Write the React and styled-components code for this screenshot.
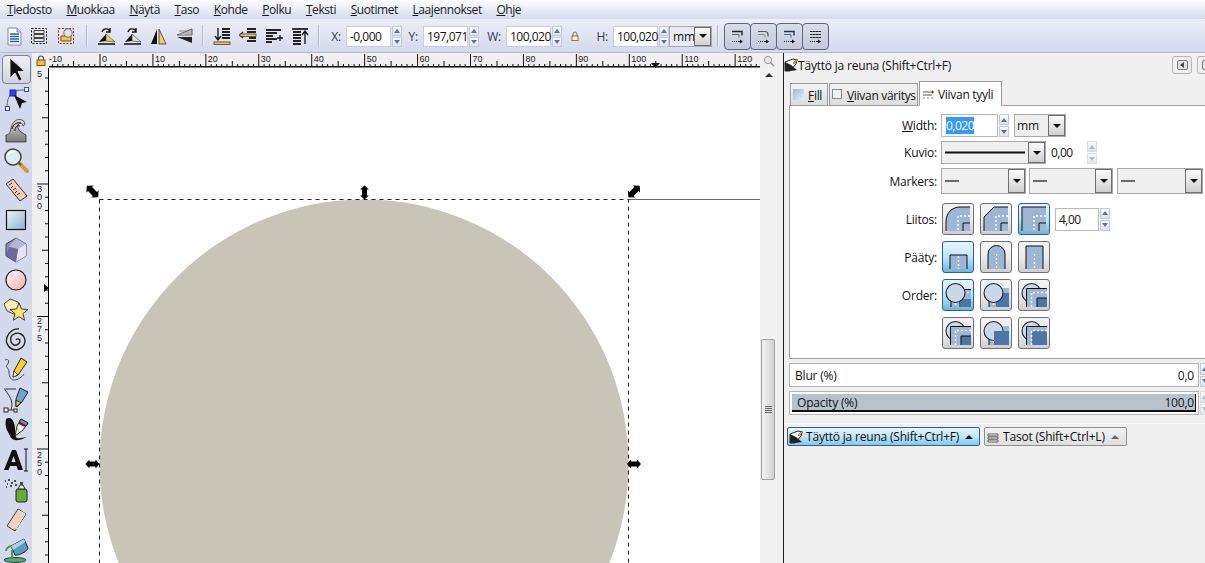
import React from "react";
import styled, { createGlobalStyle } from "styled-components";

const Global = createGlobalStyle`
  html, body { margin: 0; padding: 0; background: #f0f0f0; }
  body { font-family: "Open Sans", "Noto Sans", sans-serif; font-size: 12px; letter-spacing: -0.2px; color: #111; }
`;
const Page = styled.div`
  width: 1205px; height: 563px; overflow: hidden; display: flex; flex-direction: column;
`;
const MenuBar = styled.div`
  height: 19px; display: flex; align-items: center; gap: 14.6px; padding-left: 7px;
  background: linear-gradient(#fbfcfe, #f3f5fa 25%, #d4d9ed);
  border-bottom: 1px solid #eef0f8;
`;
const MenuItem = styled.span`font-size: 12px; letter-spacing: -0.42px; color: #1a1a1a;`;
const ToolBar = styled.div`
  height: 32px; display: flex; align-items: center; padding-left: 1px;
  background: linear-gradient(#eceef7, #d4d9ec);
  border-bottom: 1px solid #b4b9cb;
`;
const TIcon = styled.div`
  width: ${p => p.$w || 26}px; height: 24px; display: flex; align-items: center; justify-content: center; flex: none;
`;
const Sep = styled.div`
  width: 1px; height: 22px; background: #b6bac8; border-right: 1px solid #eef0f7; flex: none;
  margin: 0 5px;
`;
const CoordLabel = styled.span`
  flex: none; text-align: right; width: ${p => p.$w}px; margin-right: 5px; color: #333a55;
`;
const Field = styled.div`
  flex: none; width: ${p => p.$w}px; height: ${p => p.$h || 21}px; background: #fff; border: 1px solid ${p => p.$bc || "#c9cdd8"};
  box-sizing: border-box; display: flex; align-items: center; padding: 0 ${p => p.$pad || 2}px; letter-spacing: -0.5px; color: #111;
  margin-left: ${p => p.$ml || 0}px;
`;
const Spin = styled.div`
  flex: none; width: 11px; height: ${p => p.$h || 21}px; display: flex; flex-direction: column; box-sizing: border-box; gap: 1px; padding-left: 1px;
`;
const SpinPart = styled.div`
  flex: 1; border: 1px solid ${p => (p.$off ? "#dcdcdc" : "#c4c8d2")}; background: linear-gradient(#fbfbfd, #dfe3ee);
  display: flex; align-items: center; justify-content: center; box-sizing: border-box;
  &::after { content: ""; border-left: 3px solid transparent; border-right: 3px solid transparent;
    ${p => (p.$down ? "border-top" : "border-bottom")}: 4px solid ${p => (p.$off ? "#b4b8c0" : "#5a6fae")}; }
`;
const Spinner = ({ h, off }) => (
  <Spin $h={h}><SpinPart $off={off} /><SpinPart $down $off={off} /></Spin>
);
const Combo = styled.div`
  flex: none; width: ${p => p.$w}px; height: ${p => p.$h}px; box-sizing: border-box; border: 1px solid #a9a9a9; background: ${p => p.$bg || "#f0f0f0"};
  display: flex; align-items: stretch; margin-left: ${p => p.$ml || 0}px;
`;
const ComboText = styled.div`
  flex: 1; display: flex; align-items: center; padding-left: ${p => p.$pl || 3}px; min-width: 0;
`;
const ComboArrow = styled.div`
  width: 17px; box-sizing: border-box; border: 1px solid #6e6e6e; background: linear-gradient(#fafafa, #e6e6e6 50%, #cfcfcf);
  display: flex; align-items: center; justify-content: center; flex: none;
  &::after { content: ""; border-left: 4px solid transparent; border-right: 4px solid transparent; border-top: 4px solid #111; }
`;
const SnapBtn = styled.div`
  width: 27px; height: 27px; box-sizing: border-box; flex: none; border: 1px solid #5e6578; border-radius: 4px; margin-right: -1px;
  background: linear-gradient(#d9deec, #c3c9dc); display: flex; align-items: center; justify-content: center;
`;
const Main = styled.div`flex: 1; display: flex; min-height: 0;`;
const ToolBox = styled.div`
  width: 32px; flex: none; background: #d4daee; padding-top: 2px; box-sizing: border-box; display: flex; flex-direction: column; align-items: center;
`;
const Tool = styled.div`
  width: 29px; height: 30px; box-sizing: border-box; display: flex; align-items: center; justify-content: center; flex: none;
  ${p => p.$active && `border: 1px solid #7b8190; border-radius: 4px; background: linear-gradient(#eff0f3,#d2d4dc); height: 29px; margin-bottom: 1px;`}
`;
const Work = styled.div`
  width: 745px; flex: none; display: grid; grid-template-columns: 17px 711px 17px; grid-template-rows: 15px 1fr;
  background: #f0f0f0; min-height: 0;
`;
const LockCell = styled.div`display: flex; align-items: center; justify-content: center;`;
const TopRuler = styled.div`overflow: hidden; height: 15px;`;
const ZoomCell = styled.div`display: flex; align-items: center; justify-content: center; background: #f0f0f0;`;
const SideRuler = styled.div`overflow: hidden;`;
const Canvas = styled.div`background: #fff; overflow: hidden;`;
const ScrollBar = styled.div`
  background: #f1f1f1; position: relative; display: flex; justify-content: center; padding-top: 5px; box-sizing: border-box;
  &::before { content: ""; border-left: 4px solid transparent; border-right: 4px solid transparent; border-bottom: 4px solid #333; height: 0; }
`;
const Thumb = styled.div`
  position: absolute; left: 1px; top: 271px; width: 14px; height: 141px; box-sizing: border-box;
  border: 1px solid #a3a3a3; border-radius: 2px; background: linear-gradient(90deg, #f2f2f2, #e4e4e4 45%, #cfcfcf);
  display: flex; align-items: center; justify-content: center;
`;
const Grip = styled.div`
  width: 7px; height: 7px; background: repeating-linear-gradient(#666 0 1px, #ddd 1px 2px);
`;
const Gutter = styled.div`width: 6px; flex: none; background: #f0f0f0;`;
const Panel = styled.div`
  flex: 1; min-width: 0; background: #f0f0f0; border-left: 1px solid #1c1c1c; display: flex; flex-direction: column; padding-left: 5px; box-sizing: border-box;
`;
const PanelTitle = styled.div`
  height: 24px; margin-left: -5px; display: flex; align-items: center; padding-left: 0; flex: none;
`;
const TitleBtns = styled.div`margin-left: auto; display: flex; gap: 5px; margin-right: -12px;`;
const TitleBtn = styled.div`
  width: 20px; height: 18px; box-sizing: border-box; border: 1px solid #b5b5b5; border-radius: 3px; background: #efefef;
  display: flex; align-items: center; justify-content: center;
`;
const TitleGlyph = styled.div`
  width: 11px; height: 10px; box-sizing: border-box; border: 1px solid #777; border-radius: 2px; background: #e4e4e4; display: flex; align-items: center; justify-content: center;
  &::after { content: ""; border-top: 3px solid transparent; border-bottom: 3px solid transparent; border-right: 4px solid #444; }
`;
const Tabs = styled.div`
  height: 25px; display: flex; align-items: flex-end; padding-left: 2px; gap: 1px; flex: none; margin-top: 4px; margin-left: -1px; position: relative; z-index: 1; margin-bottom: -1px;
`;
const Tab = styled.div`
  box-sizing: border-box; width: ${p => p.$w}px; height: ${p => (p.$active ? 25 : 23)}px; border: 1px solid #9a9a9a; display: flex; align-items: center; gap: ${p => (p.$active ? 4 : 3)}px; padding: 1px 0 0 ${p => (p.$active ? 3 : 2)}px;
  white-space: nowrap; letter-spacing: -0.3px; overflow: hidden;
  background: ${p => (p.$active ? "#fff" : "linear-gradient(#f4f4f4,#dcdcdc)")};
  ${p => p.$active && "border-bottom: 1px solid #fff;"}
`;
const Book = styled.div`
  height: 254px; box-sizing: border-box; background: #fff; border: 1px solid #a0a0a0; border-right: none; flex: none; padding-top: 8px;
`;
const Row = styled.div`
  display: flex; align-items: center; height: ${p => p.$h}px; margin-top: ${p => p.$mt || 0}px;
`;
const RowLabel = styled.div`
  width: 151px; flex: none; text-align: right; padding-right: 4px; box-sizing: border-box; color: #111;
`;
const Btns = styled.div`display: flex; gap: 6px; flex: none; margin-left: 1px;`;
const StyleBtn = styled.div`
  width: 32px; height: 32px; box-sizing: border-box; border: 1px solid ${p => (p.$on ? "#2c628b" : "#707070")}; border-radius: 3px; flex: none;
  background: ${p => (p.$on ? "linear-gradient(#e6f5fd,#bfe6fb 50%,#6bb6dc)" : "linear-gradient(#f3f3f3,#ececec 50%,#cfcfcf)")};
  display: flex; align-items: center; justify-content: center;
`;
const Selected = styled.span`background: #3399ff; color: #fff;`;
const Slider = styled.div`
  height: 24px; box-sizing: border-box; flex: none; display: flex; margin-top: 4px;
`;
const SliderBody = styled.div`
  width: 410px; box-sizing: border-box; border: 1px solid #b4b4b4; background: #fff; padding: ${p => (p.$fill ? "2px" : "0")};
  display: flex; flex: none;
`;
const SliderFill = styled.div`
  flex: 1; display: flex; align-items: center; justify-content: space-between; padding: 0 ${p => (p.$fill ? 1 : 4)}px 0 5px;
  background: ${p => (p.$fill ? "#b6c2cc" : "#fff")};
  ${p => p.$fill && "border-bottom: 2px solid #111; border-right: 1px solid #111;"}
`;
const SliderSpin = styled.div`width: 6px; overflow: hidden; flex: none;`;
const Dock = styled.div`
  margin-top: 8px; border-top: 1px solid #fafafa; margin-left: -5px; padding: 3px 0 0 3px; display: flex; gap: 4px; flex: none;
`;
const DockBtn = styled.div`
  height: 19px; width: ${p => p.$w}px; box-sizing: border-box; border: 1px solid ${p => (p.$on ? "#2c628b" : "#8e8f8f")}; border-radius: 2px; display: flex; align-items: center; gap: 3px; padding-left: 1px; flex: none;
  background: ${p => (p.$on ? "linear-gradient(#e6f5fd,#bfe6fb 50%,#85c8ea)" : "linear-gradient(#f3f3f3,#dedede)")};
`;
const Caret = styled.span`
  margin-left: 3px; border-left: 4px solid transparent; border-right: 4px solid transparent; border-bottom: 4px solid ${p => p.$c}; 
`;

const M = ({ u, children }) => (
  <MenuItem><u>{u}</u>{children}</MenuItem>
);
const menus = [["T", "iedosto"], ["M", "uokkaa"], ["N", "äytä"], ["T", "aso"], ["K", "ohde"], ["P", "olku"], ["T", "eksti"], ["S", "uotimet"], ["L", "aajennokset"], ["O", "hje"]];

/* ---------- toolbar icons ---------- */
const S = ({ children, s = 22 }) => <svg width={s} height={s} viewBox={`0 0 ${s} ${s}`}>{children}</svg>;
const Doc = () => <S><path d="M5 3h9l4 4v13H5z" fill="#fff" stroke="#7a8aa8" /><path d="M14 3v4h4" fill="#d5dce8" stroke="#7a8aa8" /><path d="M7 9h9M7 11.500h9M7 14h9M7 16.500h9" stroke="#2c5fb0" strokeWidth="1.400" /></S>;
const SelLayers = () => <S><rect x="3.500" y="3.500" width="15" height="15" fill="none" stroke="#111" strokeDasharray="2 1.500" /><path d="M6 5.500h10v3H6zM6 9.500h10v3H6zM6 13.500h10v3H6z" fill="#e6e6e6" stroke="#444" /></S>;
const SelTouch = () => <S><rect x="3.500" y="3.500" width="15" height="15" fill="none" stroke="#d01010" strokeDasharray="2 1.500" /><path d="M6 11h5v-1h5v6H6z" fill="#f0c93a" stroke="#6a5a10" /><circle cx="13" cy="8" r="4.200" fill="#d8e8f4" stroke="#667" /></S>;
const Raise = ({ flip }) => <S>
  <path d="M3 19h17" stroke="#111" strokeWidth="1.500" />
  <path d="M4 17l7-1V9z" fill="#111" /><path d="M11 16l9 1-9-8z" fill={flip ? "#e0e0e0" : "#f0cf60"} stroke="#333" strokeWidth=".6" />
  <path d="M7 7c1-4 6-4 8-1M15 3v4h-4" fill="none" stroke="#111" strokeWidth="1.400" />
</S>;
const FlipH = () => <S><path d="M10 4v15H4z" fill="#111" /><path d="M12 4v15h7z" fill="#f0cf60" stroke="#333" strokeWidth=".8" /></S>;
const FlipV = () => <S><path d="M19 4v6H4z" fill="#e2e2e2" stroke="#444" strokeWidth=".8" /><path d="M19 18v-6H4z" fill="#222" /><path d="M6 6h13M10 8h9" stroke="#777" strokeWidth=".8" /></S>;
const Align = ({ v }) => <S>
  {v === 0 && <><path d="M7 3v12M4 11l3 4 3-4" fill="none" stroke="#111" strokeWidth="1.300" /><path d="M11 4h8M11 7h8M11 10h8M11 13h8" stroke="#222" strokeWidth="2" /><rect x="3" y="17" width="16" height="2.500" fill="#f0cf60" stroke="#222" strokeWidth=".7" /></>}
  {v === 1 && <><path d="M3 10h7M6 7l-3 3 3 3" fill="none" stroke="#111" strokeWidth="1.300" /><path d="M10 4h9M10 7h9M12 13h7M10 16h9" stroke="#222" strokeWidth="2" /><rect x="3" y="9" width="16" height="2.500" fill="#f0cf60" stroke="#222" strokeWidth=".7" /></>}
  {v === 2 && <><path d="M3 5h15M3 8h11M3 11h7M3 14h11M3 17h6" stroke="#222" strokeWidth="2" /><path d="M14 13h6M17 10v6" stroke="#111" strokeWidth="1.300" /></>}
  {v === 3 && <><rect x="3" y="3" width="16" height="2" fill="#333" /><path d="M4 7h8M4 10h8M4 13h8M4 16h8M4 19h8" stroke="#222" strokeWidth="2" /><path d="M16 19V7M13 10l3-4 3 4" fill="none" stroke="#111" strokeWidth="1.300" /></>}
</S>;
const SnapArrow = () => <><path d="M3 13.500h1M5 13.500h1M7 13.500h1M9 13.500h2" stroke="#222" /><path d="M11 11.500l3 2-3 2z" fill="#111" /></>;
const Snap = ({ k }) => <S s={17}>
  {k === 0 && <><path d="M3 3.500h10v4" fill="none" stroke="#222" strokeWidth="1.400" /><path d="M3 6.500h7v3" fill="none" stroke="#667" /><SnapArrow /></>}
  {k === 1 && <><path d="M3 3.500h7c2 0 3 1 3 3v2" fill="none" stroke="#555" strokeWidth="1.200" /><path d="M3 6.500h5c2 0 2 1 2 3" fill="none" stroke="#888" /><SnapArrow /></>}
  {k === 2 && <><path d="M3 3.500h10v4" fill="none" stroke="#234" strokeWidth="1.400" /><path d="M3 6.500h7v3" fill="none" stroke="#46a" /><SnapArrow /></>}
  {k === 3 && <><path d="M3 3.500h11M3 6.500h11M3 9.500h11" stroke="#222" strokeDasharray="2 1" /><path d="M5.500 3v7M8.500 3v7M11.500 3v7" stroke="#555" strokeDasharray="1 2" /><SnapArrow /></>}
</S>;
const LockIcon = () => <S s={12}><path d="M3.500 5V3.500a2.500 2.500 0 0 1 5 0V5" fill="none" stroke="#555" strokeWidth="1.200" /><rect x="2" y="5" width="8" height="5.500" fill="#f2c23c" stroke="#7a5a10" /></S>;
const SmallLock = () => <S s={12}><path d="M4 6V4a2 2 0 0 1 4 0v2" fill="none" stroke="#777" /><rect x="3" y="6" width="6" height="4.500" fill="#f7f2d4" stroke="#8a7a30" /></S>;
const ZoomGlyph = () => <S s={12}><circle cx="5" cy="5" r="3.600" fill="#e8e8e8" stroke="#999" /><path d="M7.500 7.500l3.500 3.500" stroke="#999" strokeWidth="1.600" /></S>;

/* ---------- left toolbox icons ---------- */
const T = ({ children }) => <svg width="26" height="26" viewBox="0 0 26 26">{children}</svg>;
const SelectTool = () => <T><path d="M7 1v20l5-5 4 8 3-1.500-4-8h7z" fill="#111" stroke="#eee" strokeWidth=".8" /></T>;
const NodeTool = () => <T><path d="M4 21c0-8 2-14 7-16 3-2 7-2 11-2" fill="none" stroke="#666" /><rect x="7" y="3" width="6" height="6" fill="#3a3af0" stroke="#2222a0" /><rect x="21.500" y="0.500" width="4" height="4" fill="#fff" stroke="#4040e0" /><rect x="2.500" y="19.500" width="4" height="4" fill="#fff" stroke="#4040e0" /><path d="M11 8l13 7-5 1-2 6z" fill="#111" /></T>;
const TweakTool = () => <T><defs><linearGradient id="tw" x1="0" y1="0" x2="0" y2="1"><stop offset="0" stopColor="#ddd" /><stop offset="1" stopColor="#777" /></linearGradient></defs><path d="M3 18c3 0 4-2 5-7 1-6 6-10 11-8 3 1 4 5 1 6 0-3-4-4-5-1-1 4 2 7 8 10v7H3z" fill="url(#tw)" stroke="#333" strokeWidth=".8" /><path d="M9 12c1-5 5-7 9-6M12 14c0-4 2-6 5-5" fill="none" stroke="#111" /></T>;
const ZoomTool = () => <T><circle cx="10" cy="10" r="8" fill="#dcebf5" stroke="#444" strokeWidth="1.500" /><path d="M17 17l7 7" stroke="#e0962a" strokeWidth="4" strokeLinecap="round" /><path d="M15 15l3 3" stroke="#555" strokeWidth="2" /><path d="M5 8c1-3 4-4 6-3" fill="none" stroke="#fff" strokeWidth="1.600" /></T>;
const MeasureTool = () => <T><path d="M3 7l7-5 14 17-7 5z" fill="#f4cdb6" stroke="#333" /><path d="M6 8l3-2M8 11l2-2M10 13l3-2M12 16l2-2M14 18l3-2" stroke="#333" /></T>;
const RectTool = () => <T><defs><linearGradient id="rc" x1="0" y1="0" x2="1" y2="1"><stop offset="0" stopColor="#eef3f8" /><stop offset="1" stopColor="#8fb0cf" /></linearGradient></defs><rect x="3.500" y="3.500" width="19" height="19" fill="url(#rc)" stroke="#111" strokeWidth="1.200" /></T>;
const BoxTool = () => <T><path d="M13 1l10 6v12l-10 6-10-6V7z" fill="#8c8cbc" stroke="#444" /><path d="M13 1l10 6-8 5-9-2z" fill="#b6b6d8" /><path d="M15 12l8-5v12l-10 6z" fill="#e4e4f6" /><path d="M6 10l9 2-2 13-10-6z" fill="#6a6a9c" /></T>;
const CircleTool = () => <T><defs><linearGradient id="ci" x1="0" y1="0" x2="1" y2="1"><stop offset="0" stopColor="#fff" /><stop offset="1" stopColor="#f8a8a8" /></linearGradient></defs><circle cx="13" cy="13" r="10" fill="url(#ci)" stroke="#222" strokeWidth="1.200" /></T>;
const StarTool = () => <T><path d="M7 2l8 3 3 6-5 7-9-4-3-7z" fill="#f7eeb8" stroke="#444" /><path d="M16 6l2.500 6 6.500 0.500-5 4.200 1.600 6.500-5.600-3.500-5.600 3.500 1.600-6.500-5-4.200 6.500-.5z" fill="#f8e36c" stroke="#444" /></T>;
const SpiralTool = () => <T><path d="M13 13c1-2 4-1 4 1s-3 5-6 4-4-5-3-8 6-5 10-3 5 7 3 11-8 6-12 4-7-7-5-12S11 1 16 2" fill="none" stroke="#222" strokeWidth="1.400" /></T>;
const PencilTool = () => <T><path d="M2 3c5-2 4 3 2 5s2 3 2 7c0 3 1 8 5 8 4 0 8-3 10-6" fill="none" stroke="#444" /><path d="M18 1l6 4-9 13-5 2 1-6z" fill="#f7d02c" stroke="#222" /><path d="M10 20l1-6 4 4z" fill="#fff" stroke="#222" strokeWidth=".7" /></T>;
const PenTool = () => <T><path d="M1 2h12M2 3c4 5 9 11 6 20M3 23h10" fill="none" stroke="#333" /><rect x="1" y="21" width="4" height="4" fill="#fff" stroke="#222" /><rect x="11" y="22" width="3" height="3" fill="#fff" stroke="#222" /><path d="M17 1l8 4-6 10-5 5-1-1 0-7z" fill="#6aa6d0" stroke="#222" /><path d="M13 13l5 3-5 4z" fill="#f7d02c" stroke="#222" /></T>;
const CallTool = () => <T><path d="M3 2c-1 6 0 10 2 13s2 7 7 8 9-2 12-3c-4 0-9 3-11 0s0-9-2-14-4-6-8-4z" fill="#111" /><path d="M18 2l7 4-5 7-8 6 2-10z" fill="#fff" stroke="#222" /><path d="M18 2l7 4-2 3-7-4z" fill="#5a96c8" stroke="#222" /><path d="M16 6l6 3" stroke="#a01010" strokeWidth="2" /><path d="M14 11l2 4" stroke="#e0b020" /></T>;
const TextTool = () => <T><path d="M1 23L9 3h4l7 20h-5l-1.500-4H7l-1.500 4zM8.500 15h4L10.500 9z" fill="#111" fillRule="evenodd" /><path d="M21 2h4M23 2v22M21 24h4" stroke="#111" fill="none" /></T>;
const SprayTool = () => <T><rect x="13" y="12" width="11" height="13" rx="2" fill="#62b030" stroke="#222" /><path d="M15 12l2-4h3l2 4z" fill="#eee" stroke="#222" /><rect x="17" y="5" width="3" height="3" fill="#444" /><path d="M2 4h1M5 3h2M8 6h2M4 7h1M7 9h2M11 4h2M12 8h2M3 10h1" stroke="#222" strokeWidth="1.600" /></T>;
const EraserTool = () => <T><path d="M15 2l8 5-11 17-8-5z" fill="#f7cdbb" stroke="#444" /><path d="M15 3l7 4-9 15" fill="none" stroke="#fff" /></T>;
const FillTool = () => <T><ellipse cx="12" cy="23" rx="11" ry="2.500" fill="#5ea85e" stroke="#245" /><path d="M8 9l13-7 4 9c0 3-10 8-13 7z" fill="#5e9ac0" stroke="#123" /><path d="M8 9l13-7 1.500 3L10 13z" fill="#a8d0e8" /><path d="M8 9c-3 1-5 2-5 5M9 13v9" stroke="#4e9a4e" strokeWidth="2" fill="none" /></T>;
const tools = [NodeTool, TweakTool, ZoomTool, MeasureTool, RectTool, BoxTool, CircleTool, StarTool, SpiralTool, PencilTool, PenTool, CallTool, TextTool, SprayTool, EraserTool, FillTool];

/* ---------- rulers and canvas ---------- */
const PX10 = 52.93;
const RULER_FONT = "'Liberation Sans',sans-serif";
const TopRulerSvg = () => {
  const marks = [];
  for (let i = -10; i <= 125; i++) {
    const x = 51 + (i * PX10) / 10;
    const h = i % 10 === 0 ? 13 : i % 5 === 0 ? 6 : 3;
    marks.push(<line key={i} x1={x} x2={x} y1={14 - h} y2={14} stroke="#111" strokeWidth="1" />);
    if (i % 10 === 0) marks.push(<text key={"t" + i} x={x + 2} y={9} fontSize="9" letterSpacing="0" fontFamily={RULER_FONT} fill="#222">{i}</text>);
  }
  return <svg width="711" height="15">
    <rect x="0" y="13" width="711" height="1.500" fill="#111" />
    {marks}
    <path d="M602 10h9l-4.500 5z" fill="#111" />
  </svg>;
};
const SideRulerSvg = () => {
  const marks = [];
  const base = 116;
  for (let i = -8; i < 40; i++) {
    const y = base + i * 13.25;
    const long = ((i % 10) + 10) % 10 === 0;
    const mid = ((i % 5) + 5) % 5 === 0;
    marks.push(<line key={i} x1={long ? 5 : mid ? 10 : 13} x2={16} y1={y} y2={y} stroke="#111" />);
  }
  const label = (s, y0) => s.split("").map((c, i) => <text key={s + i} x="5" y={y0 + i * 8.300} fontSize="9" letterSpacing="0" fontFamily={RULER_FONT} fill="#223">{c}</text>);
  return <svg width="17" height="495">
    <rect x="16" y="0" width="1" height="495" fill="#000" />
    {marks}
    {label("5", 9)}{label("300", 124)}{label("275", 256)}{label("250", 390)}
    <path d="M12 216l5 4-5 4z" fill="#111" />
  </svg>;
};
const Handle = ({ x, y, r, k = 1 }) => <path transform={`translate(${x} ${y}) rotate(${r}) scale(${k})`} d="M-7 0L-3 -4.500V-2.500H3V-4.500L7 0L3 4.500V2.500H-3V4.500Z" fill="#000" />;
const CanvasSvg = () => (
  <svg width="711" height="495" viewBox="49 68 711 495">
    <path d="M628 199.500H760" stroke="#666" strokeWidth="1" />
    <circle cx="364" cy="464" r="264.500" fill="#c8c4b7" />
    <rect x="99.500" y="199.500" width="529" height="529" fill="none" stroke="#222" strokeDasharray="4 4" />
    <Handle x={92.500} y={191.500} r={45} k={1.150} />
    <Handle x={364.500} y={192.500} r={90} />
    <Handle x={634} y={191.500} r={-45} k={1.150} />
    <Handle x={92.500} y={464} r={0} />
    <Handle x={634} y={464} r={0} />
  </svg>
);

/* ---------- stroke style icons ---------- */
const B = ({ children }) => <svg width="30" height="30" viewBox="0 0 30 30">{children}</svg>;
const BL = "#9db6d6", DK = "#111", DB = "#4a76a8";
const Dots = ({ d }) => <path d={d} fill="none" stroke="#fff" strokeWidth="1.500" strokeDasharray="2 2" />;
const JoinRound = () => <B><path d="M3 27V18C3 9 9 3 17 3H27V27z" fill={BL} /><path d="M3 27V18C3 9 9 3 17 3H27" fill="none" stroke={DK} /><path d="M27 19H20V27" fill="none" stroke={DK} /><Dots d="M27 12H15V27" /></B>;
const JoinBevel = () => <B><path d="M3 27V13L13 3H27V27z" fill={BL} /><path d="M3 27V13L13 3H27" fill="none" stroke={DK} /><path d="M27 19H20V27" fill="none" stroke={DK} /><Dots d="M27 12H15V27" /></B>;
const JoinMiter = () => <B><path d="M3 27V3H27V27z" fill={BL} /><path d="M3 27V3H27" fill="none" stroke={DK} /><path d="M27 19H20V27" fill="none" stroke={DK} /><Dots d="M27 12H15V27" /></B>;
const CapButt = () => <B><path d="M7 27V13H24V27z" fill={BL} /><path d="M7 27V13H24V27" fill="none" stroke={DK} /><Dots d="M15.500 14V27" /></B>;
const CapRound = () => <B><path d="M7 27V12a8.500 8.500 0 0 1 17 0V27z" fill={BL} /><path d="M7 27V12a8.500 8.500 0 0 1 17 0V27" fill="none" stroke={DK} /><Dots d="M15.500 12V27" /></B>;
const CapSquare = () => <B><path d="M7 27V4H24V27z" fill={BL} /><path d="M7 27V4H24V27" fill="none" stroke={DK} /><Dots d="M15.500 12V27" /></B>;
const Ball = () => <circle cx="12.500" cy="13" r="9.500" fill="#cad8e8" stroke="#222" strokeWidth="1.100" />;
const Legs = () => <><rect x="8" y="20" width="9" height="7" fill={BL} /><path d="M8 21v6M17 21v6" stroke="#111" /><Dots d="M12.500 23V27" /></>;
const LStroke = () => <path d="M7.500 27V8.500H28V27z" fill={BL} />;
const LEdge = () => <path d="M7.500 27V8.500H28" fill="none" stroke="#111" />;
const Order1 = () => <B><rect x="18" y="9" width="10" height="18" fill={BL} /><path d="M18 9.500h10" stroke="#111" /><rect x="18" y="19" width="10" height="8" fill={DB} /><Dots d="M20 12.500H27" /><Legs /><Ball /></B>;
const Order2 = () => <B><rect x="18" y="8" width="10" height="6" fill={BL} /><rect x="14" y="13" width="14" height="14" fill={DB} /><rect x="8" y="20" width="7" height="7" fill={BL} /><path d="M8 21v6" stroke="#111" /><Dots d="M12.500 23V27" /><Ball /></B>;
const Order3 = () => <B><Ball /><LStroke /><rect x="18" y="18" width="10" height="9" fill={DB} /><path d="M28 18H18V27" fill="none" stroke="#111" /><LEdge /><Dots d="M28 12.500H12.500V27" /></B>;
const Order5 = () => <B><rect x="17" y="8" width="11" height="8" fill={BL} /><rect x="8" y="20" width="6" height="7" fill={BL} /><path d="M8 21v6" stroke="#111" /><Ball /><Dots d="M12.500 23V27" /><rect x="13" y="13" width="15" height="14" fill={DB} /></B>;
const Order6 = () => <B><Ball /><LStroke /><LEdge /><rect x="13" y="13" width="15" height="14" fill={DB} /><Dots d="M28 12.500H12.500V27" /></B>;
const FillStroke = () => <S s={14}><path d="M1 13V4L9 1l4 1-1 4-6 7z" fill="#fff" stroke="#222" /><path d="M1 13V4l6 3 6 5-6 1z" fill="#222" /><path d="M9 5l4-4 1 1-4 4z" fill="#f0b020" stroke="#643" strokeWidth=".5" /></S>;
const LayersSmall = () => <S s={14}><path d="M2 4h10v2H2zM2 7h10v2H2zM2 10h10v2H2z" fill="#eee" stroke="#444" strokeWidth=".8" /></S>;
const FillSwatch = () => <svg width="12" height="12" viewBox="0 0 12 12"><defs><linearGradient id="sw" x1="0" y1="0" x2="1" y2="1"><stop offset="0" stopColor="#9db8de" /><stop offset="1" stopColor="#e8eef8" /></linearGradient></defs><rect width="11" height="11" fill="url(#sw)" /></svg>;
const StrokeSwatch = () => <svg width="12" height="12" viewBox="0 0 12 12"><rect x=".5" y=".5" width="9" height="9" fill="#f0f0f0" stroke="#8a8a8a" /></svg>;
const StyleGlyph = () => <svg width="11" height="10" viewBox="0 0 11 10"><path d="M0 3h9M0 6h9" stroke="#555" /><path d="M0 9h2M4 9h2M8 9h2" stroke="#888" /><path d="M9 1l2 2-2 2z" fill="#333" /></svg>;
const MarkerLine = () => <svg width="16" height="3" viewBox="0 0 16 3"><path d="M0 1h14" stroke="#333" strokeWidth="1.400" /></svg>;
const DashLine = () => <svg width="80" height="3" viewBox="0 0 80 3"><path d="M0 1.500h80" stroke="#111" strokeWidth="1.800" /></svg>;

export default function App() {
  return (
    <Page>
      <Global />
      <MenuBar>{menus.map(([u, r], i) => <M key={i} u={u}>{r}</M>)}</MenuBar>
      <ToolBar>
        <TIcon><Doc /></TIcon>
        <TIcon $w={24}><SelLayers /></TIcon>
        <TIcon $w={30}><SelTouch /></TIcon>
        <Sep />
        <TIcon><Raise /></TIcon><TIcon><Raise flip /></TIcon><TIcon><FlipH /></TIcon><TIcon><FlipV /></TIcon>
        <Sep />
        <TIcon><Align v={0} /></TIcon><TIcon><Align v={1} /></TIcon><TIcon><Align v={2} /></TIcon><TIcon><Align v={3} /></TIcon>
        <Sep />
        <CoordLabel $w={16}>X:</CoordLabel>
        <Field $w={45} $pad={3}>-0,000</Field><Spinner />
        <CoordLabel $w={16}>Y:</CoordLabel>
        <Field $w={45} $pad={3}>197,071</Field><Spinner />
        <CoordLabel $w={22}>W:</CoordLabel>
        <Field $w={45} $pad={3}>100,020</Field><Spinner />
        <TIcon $w={26}><SmallLock /></TIcon>
        <CoordLabel $w={20}>H:</CoordLabel>
        <Field $w={45} $pad={3}>100,020</Field><Spinner />
        <Combo $w={43} $h={21} $bg="#e8ebf4"><ComboText>mm</ComboText><ComboArrow /></Combo>
        <Sep />
        {[0, 1, 2, 3].map(k => <SnapBtn key={k}><Snap k={k} /></SnapBtn>)}
      </ToolBar>
      <Main>
        <ToolBox>
          <Tool $active><SelectTool /></Tool>
          {tools.map((I, i) => <Tool key={i}><I /></Tool>)}
        </ToolBox>
        <Work>
          <LockCell><LockIcon /></LockCell>
          <TopRuler><TopRulerSvg /></TopRuler>
          <ZoomCell><ZoomGlyph /></ZoomCell>
          <SideRuler><SideRulerSvg /></SideRuler>
          <Canvas><CanvasSvg /></Canvas>
          <ScrollBar><Thumb><Grip /></Thumb></ScrollBar>
        </Work>
        <Gutter />
        <Panel>
          <PanelTitle>
            <FillStroke />Täyttö ja reuna (Shift+Ctrl+F)
            <TitleBtns>
              <TitleBtn><TitleGlyph /></TitleBtn>
              <TitleBtn><TitleGlyph /></TitleBtn>
            </TitleBtns>
          </PanelTitle>
          <Tabs>
            <Tab $w={38}><FillSwatch /><span><u>F</u>ill</span></Tab>
            <Tab $w={89}><StrokeSwatch /><span><u>V</u>iivan väritys</span></Tab>
            <Tab $w={83} $active><StyleGlyph /><span>Viivan t<u>y</u>yli</span></Tab>
          </Tabs>
          <Book>
            <Row $h={23}>
              <RowLabel><u>W</u>idth:</RowLabel>
              <Field $w={57} $h={23} $pad={4} $bc="#b8b8b8"><Selected>0,020</Selected></Field><Spinner h={23} />
              <Combo $w={52} $h={23} $ml={5}><ComboText $pl={2}>mm</ComboText><ComboArrow /></Combo>
            </Row>
            <Row $h={23} $mt={4}>
              <RowLabel>Kuvio:</RowLabel>
              <Combo $w={105} $h={23}><ComboText $pl={3}><DashLine /></ComboText><ComboArrow /></Combo>
              <Field $w={39} $h={23} $pad={3} $bc="#ffffff" $ml={1}>0,00</Field><Spinner h={23} off />
            </Row>
            <Row $h={26} $mt={4}>
              <RowLabel>Markers:</RowLabel>
              <Combo $w={85} $h={26}><ComboText><MarkerLine /></ComboText><ComboArrow /></Combo>
              <Combo $w={84} $h={26} $ml={3}><ComboText><MarkerLine /></ComboText><ComboArrow /></Combo>
              <Combo $w={86} $h={26} $ml={4}><ComboText><MarkerLine /></ComboText><ComboArrow /></Combo>
            </Row>
            <Row $h={32} $mt={9}>
              <RowLabel>Liitos:</RowLabel>
              <Btns>
                <StyleBtn><JoinRound /></StyleBtn><StyleBtn><JoinBevel /></StyleBtn><StyleBtn $on><JoinMiter /></StyleBtn>
              </Btns>
              <Field $w={44} $h={23} $pad={3} $bc="#b8b8b8" $ml={5}>4,00</Field><Spinner h={23} />
            </Row>
            <Row $h={32} $mt={6}>
              <RowLabel>Pääty:</RowLabel>
              <Btns><StyleBtn $on><CapButt /></StyleBtn><StyleBtn><CapRound /></StyleBtn><StyleBtn><CapSquare /></StyleBtn></Btns>
            </Row>
            <Row $h={32} $mt={6}>
              <RowLabel>Order:</RowLabel>
              <Btns><StyleBtn $on><Order1 /></StyleBtn><StyleBtn><Order2 /></StyleBtn><StyleBtn><Order3 /></StyleBtn></Btns>
            </Row>
            <Row $h={32} $mt={6}>
              <RowLabel />
              <Btns><StyleBtn><Order3 /></StyleBtn><StyleBtn><Order5 /></StyleBtn><StyleBtn><Order6 /></StyleBtn></Btns>
            </Row>
          </Book>
          <Slider>
            <SliderBody><SliderFill>Blur (%)<span>0,0</span></SliderFill></SliderBody>
            <SliderSpin><Spinner h={24} /></SliderSpin>
          </Slider>
          <Slider>
            <SliderBody $fill><SliderFill $fill>Opacity (%)<span>100,0</span></SliderFill></SliderBody>
            <SliderSpin><Spinner h={24} off /></SliderSpin>
          </Slider>
          <Dock>
            <DockBtn $w={193} $on><FillStroke />Täyttö ja reuna (Shift+Ctrl+F)<Caret $c="#111" /></DockBtn>
            <DockBtn $w={143}><LayersSmall />Tasot (Shift+Ctrl+L)<Caret $c="#666" /></DockBtn>
          </Dock>
        </Panel>
      </Main>
    </Page>
  );
}
